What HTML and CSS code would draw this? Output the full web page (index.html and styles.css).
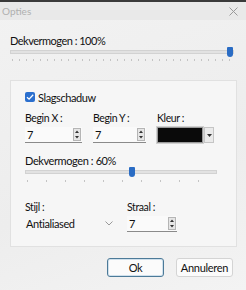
FILE: index.html
```html
<!doctype html>
<html>
	<head>
		<meta charset="utf-8" />
		<title>Opties</title>
		<link rel="stylesheet" href="styles.css">
	</head>
	<body>
		<div class="dialog">
			<div class="titlebar">
				<span class="title">Opties</span>
				<svg class="close" width="9" height="9" viewBox="0 0 9 9"><path d="M0.5 0.5 L8.5 8.5 M8.5 0.5 L0.5 8.5" stroke="#9a9a9a" stroke-width="1"/></svg>
			</div>

			<div class="content">
				<div class="label first">Dekvermogen : 100%</div>
				<div class="slider wide">
					<div class="track"></div>
					<div class="thumb thumb-end"></div>
					<div class="ticks"></div>
				</div>

				<div class="group">
					<label class="check">
						<span class="box">
							<svg width="10" height="10" viewBox="0 0 10 10"><path d="M2 5.2 L4.1 7.2 L8.2 2.8" fill="none" stroke="#fff" stroke-width="1.3"/></svg>
						</span>
						Slagschaduw
					</label>

					<div class="row">
						<div class="field w57">
							<div class="label">Begin X :</div>
							<div class="spin"><span>7</span><span class="arrows"><svg width="6" height="11" viewBox="0 0 6 11"><path d="M1 4 L3 1.5 L5 4 Z M1 7 L3 9.5 L5 7 Z" fill="#333"/></svg></span></div>
						</div>
						<div class="field w52">
							<div class="label">Begin Y :</div>
							<div class="spin"><span>7</span><span class="arrows"><svg width="6" height="11" viewBox="0 0 6 11"><path d="M1 4 L3 1.5 L5 4 Z M1 7 L3 9.5 L5 7 Z" fill="#333"/></svg></span></div>
						</div>
						<div class="field">
							<div class="label">Kleur :</div>
							<div class="colorpick">
								<span class="swatch"></span>
								<span class="drop"><svg width="5" height="3" viewBox="0 0 5 3"><path d="M0 0 L5 0 L2.5 3 Z" fill="#333"/></svg></span>
							</div>
						</div>
					</div>

					<div class="label op">Dekvermogen : 60%</div>
					<div class="slider short">
						<div class="track"></div>
						<div class="thumb thumb-mid"></div>
						<div class="ticks sparse"></div>
					</div>

					<div class="row lower">
						<div class="field w91">
							<div class="label">Stijl :</div>
							<div class="combo"><span>Antialiased</span><svg class="chev" width="8" height="5" viewBox="0 0 8 5"><path d="M0.5 0.5 L4 4 L7.5 0.5" fill="none" stroke="#999" stroke-width="1"/></svg></div>
						</div>
						<div class="field w50">
							<div class="label">Straal :</div>
							<div class="spin"><span>7</span><span class="arrows"><svg width="6" height="11" viewBox="0 0 6 11"><path d="M1 4 L3 1.5 L5 4 Z M1 7 L3 9.5 L5 7 Z" fill="#333"/></svg></span></div>
						</div>
					</div>
				</div>

				<div class="buttons">
					<button class="ok">Ok</button>
					<button>Annuleren</button>
				</div>
			</div>
		</div>
	</body>
</html>
```

FILE: styles.css
```css
body {
	margin: 0;
	font-family: Lato, "Open Sans", sans-serif;
	font-size: 10.5px;
	letter-spacing: -0.4px;
	color: #111;
	background-color: #ececec;
}
.dialog {
	width: 246px;
	height: 290px;
	border-top: 2px solid #3a3a3a;
	box-sizing: border-box;
	background: linear-gradient(160deg, #f2f2f2 0%, #ededed 60%, #f3f3f3 100%);
}
.titlebar {
	height: 18px;
	display: flex;
	justify-content: space-between;
	align-items: center;
	padding: 0 8px 0 2px;
	background-color: #e9e9e9;
}
.title {
	color: #b0b0b0;
	font-size: 10px;
	letter-spacing: 0;
}
.content {
	padding: 0 9px 0 10px;
}
.label {
	height: 15px;
	line-height: 15px;
	white-space: nowrap;
}
.label.first {
	margin-top: 13px;
	font-size: 11px;
	letter-spacing: -0.5px;
}
.slider {
	position: relative;
	height: 14px;
}
.slider.wide {
	width: 224px;
}
.slider.short {
	width: 192px;
}
.track {
	position: absolute;
	left: 0;
	right: 0;
	top: 2px;
	height: 4px;
	background-color: #e2e2e2;
	border: 1px solid #d2d2d2;
	box-sizing: border-box;
}
.thumb {
	position: absolute;
	top: -1px;
	width: 6px;
	height: 10px;
	background-color: #2a6cc4;
	border-radius: 1px 1px 3px 3px;
}
.thumb-end {
	left: 217px;
}
.thumb-mid {
	left: 104px;
}
.ticks {
	position: absolute;
	left: 2px;
	right: 2px;
	top: 11px;
	height: 2px;
	background: repeating-linear-gradient(90deg, #c4c4c4 0 1px, transparent 1px 7px);
}
.ticks.sparse {
	top: 12px;
	background: repeating-linear-gradient(90deg, #c4c4c4 0 1px, transparent 1px 19px);
}
.group {
	margin-top: 18px;
	height: 167px;
	box-sizing: border-box;
	background-color: #f6f6f6;
	border: 1px solid #e1e1e1;
	padding: 9px 0 0 14px;
}
.check {
	display: flex;
	align-items: center;
	gap: 3px;
	height: 14px;
	font-size: 11px;
}
.box {
	width: 10px;
	height: 10px;
	background-color: #2b6fce;
	border-radius: 2px;
	display: flex;
}
.row {
	display: flex;
	gap: 11px;
	margin-top: 7px;
}
.field .label {
	margin-bottom: 1px;
}
.w57 {
	width: 57px;
}
.w52 {
	width: 53px;
}
.w91 {
	width: 91px;
}
.w50 {
	width: 50px;
}
.spin {
	display: flex;
	justify-content: space-between;
	align-items: center;
	height: 15px;
	padding-left: 2px;
	background-color: #fafafa;
	border-bottom: 1px solid #8a8a8a;
	font-size: 11px;
}
.arrows {
	display: flex;
	background-color: #e6e6e6;
	border: 1px solid #b5b5b5;
	margin-right: 1px;
}
.colorpick {
	display: flex;
	height: 16px;
}
.swatch {
	width: 44px;
	background-color: #0a0a0a;
	border: 1px solid #9a9a9a;
	outline: 1px solid #d0d0d0;
}
.drop {
	width: 10px;
	margin-left: 1px;
	display: flex;
	align-items: center;
	justify-content: center;
	background-color: #eaeaea;
	border: 1px solid #c5c5c5;
	box-sizing: border-box;
}
.label.op {
	margin-top: 10px;
	font-size: 11px;
}
.row.lower {
	margin-top: 18px;
}
.combo {
	display: flex;
	justify-content: space-between;
	align-items: center;
	height: 14px;
	padding-left: 1px;
	font-size: 11px;
}
.chev {
	margin-right: 3px;
}
.buttons {
	display: flex;
	justify-content: flex-end;
	gap: 12px;
	margin-top: 11px;
	padding-right: 4px;
}
button {
	font-family: Lato, "Open Sans", sans-serif;
	font-size: 11px;
	letter-spacing: -0.3px;
	height: 19px;
	padding: 0;
	width: 57px;
	background-color: #fbfbfb;
	border: 1px solid #d4d4d4;
	border-radius: 3px;
	color: #111;
}
button.ok {
	border: 1px solid #4c7a98;
	box-shadow: inset 0 0 0 1px #cfe0ec;
}
```
